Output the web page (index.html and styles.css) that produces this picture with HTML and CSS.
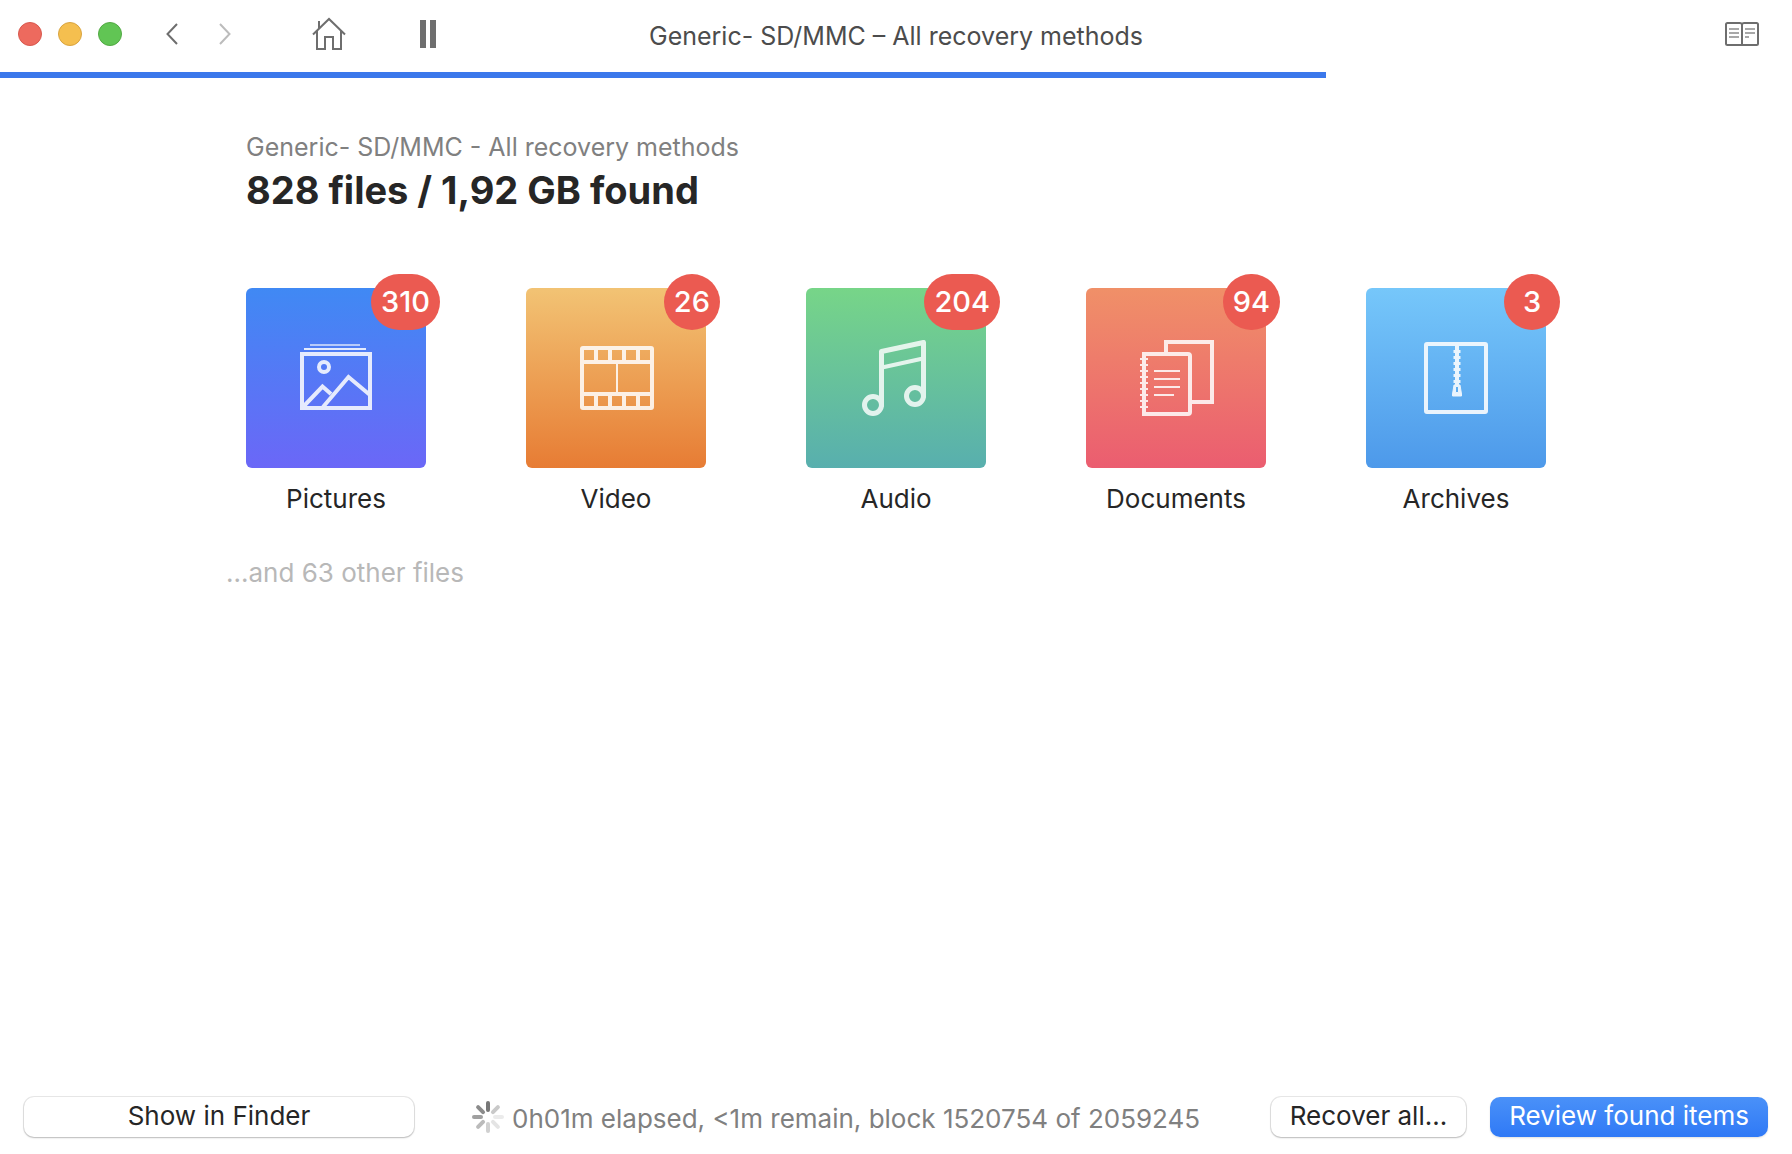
FILE: index.html
```html
<!DOCTYPE html>
<html lang="en">
<head>
    <meta charset="UTF-8">
    <meta name="viewport" content="width=device-width, initial-scale=1.0">
    <title>Generic- SD/MMC – All recovery methods</title>
    <link rel="stylesheet" href="styles.css">
</head>
<body>
    <header class="toolbar">
        <div class="toolbar-left">
            <div class="window-buttons">
                <button class="dot dot-close" aria-label="Close"></button>
                <button class="dot dot-minimize" aria-label="Minimize"></button>
                <button class="dot dot-zoom" aria-label="Zoom"></button>
            </div>
            <div class="history">
                <button class="icon-button" aria-label="Back">
                    <svg width="12" height="24" viewBox="0 0 12 24"><path d="M11 2L1.500 12L11 22"/></svg>
                </button>
                <button class="icon-button" aria-label="Forward" disabled>
                    <svg width="12" height="24" viewBox="0 0 12 24"><path d="M1 2L10.500 12L1 22"/></svg>
                </button>
            </div>
            <button class="icon-button home" aria-label="Home">
                <svg width="34" height="34" viewBox="0 0 34 34"><path d="M1 17.500L17 2L33 17.500M5 14V32H13V20H21V32H29V14M7 11V4"/></svg>
            </button>
            <button class="icon-button pause" aria-label="Pause">
                <svg width="16" height="28" viewBox="0 0 16 28"><path class="solid" d="M0 0H6V28H0ZM10 0H16V28H10Z"/></svg>
            </button>
        </div>
        <h1 class="title">Generic- SD/MMC – All recovery methods</h1>
        <div class="toolbar-right">
            <button class="icon-button" aria-label="Log">
                <svg width="34" height="24" viewBox="0 0 34 24">
                    <path d="M17 2.500Q16.500 1 15 1H2.500Q1 1 1 2.500V21.500Q1 23 2.500 23H31.500Q33 23 33 21.500V2.500Q33 1 31.500 1H19Q17.500 1 17 2.500V23"/>
                    <path class="thin" d="M4 7H14M4 11H14M4 15H14M20 7H30M20 11H30M20 15H24"/>
                </svg>
            </button>
        </div>
    </header>
    <progress class="progress" value="74" max="100" aria-label="Scan progress"></progress>

    <main class="content">
        <p class="subtitle">Generic- SD/MMC - All recovery methods</p>
        <h2 class="found">828 files / 1,92 GB found</h2>

        <div class="categories">
            <a class="category" href="#pictures">
                <span class="tile pictures">
                    <svg viewBox="0 0 180 180" width="180" height="180">
                        <g opacity="0.85" stroke-width="4">
                            <rect x="56" y="66" width="68" height="54"/>
                            <path d="M57 119L76.500 98.500L85 106M77 119L102.500 89L124 107"/>
                            <circle cx="78" cy="79" r="5"/>
                            <path stroke-width="2" d="M58 61H120"/>
                            <path stroke-width="2" opacity="0.7" d="M64 57H114"/>
                        </g>
                    </svg>
                    <span class="badge">310</span>
                </span>
                <span class="label">Pictures</span>
            </a>
            <a class="category" href="#video">
                <span class="tile video">
                    <svg viewBox="0 0 180 180" width="180" height="180">
                        <g opacity="0.85" stroke-width="4">
                            <rect x="56" y="60" width="70" height="60" rx="1"/>
                            <path d="M56 74H126M56 106H126M70 60V74M84 60V74M98 60V74M112 60V74M70 106V120M84 106V120M98 106V120M112 106V120"/>
                            <path stroke-width="2" d="M91 74V106"/>
                        </g>
                    </svg>
                    <span class="badge">26</span>
                </span>
                <span class="label">Video</span>
            </a>
            <a class="category" href="#audio">
                <span class="tile audio">
                    <svg viewBox="0 0 180 180" width="180" height="180">
                        <g opacity="0.82" stroke-width="5" stroke-linejoin="round" stroke-linecap="round">
                            <path d="M75.500 117V63.500L117.500 54.500V108"/>
                            <path stroke-width="4" d="M76 79.500L117 70.500"/>
                            <circle cx="67" cy="117" r="8.500"/>
                            <circle cx="109" cy="108" r="8.500"/>
                        </g>
                    </svg>
                    <span class="badge">204</span>
                </span>
                <span class="label">Audio</span>
            </a>
            <a class="category" href="#documents">
                <span class="tile documents">
                    <svg viewBox="0 0 180 180" width="180" height="180">
                        <g opacity="0.85" stroke-width="4">
                            <path d="M80 66V54H126V114H104"/>
                            <path d="M58 66H102Q104 66 104 68V124Q104 126 102 126H58Z"/>
                            <path stroke-width="2" d="M54 71H62M54 77H62M54 83H62M54 89H62M54 95H62M54 101H62M54 107H62M54 113H62M54 119H62"/>
                            <path stroke-width="2" d="M68 83H94M68 91H94M68 99H94M68 107H88"/>
                        </g>
                    </svg>
                    <span class="badge">94</span>
                </span>
                <span class="label">Documents</span>
            </a>
            <a class="category" href="#archives">
                <span class="tile archives">
                    <svg viewBox="0 0 180 180" width="180" height="180">
                        <g opacity="0.87" stroke-width="4">
                            <rect x="60" y="56" width="60" height="68" rx="1"/>
                            <path stroke-width="7" stroke-dasharray="3 3" d="M91 62V96"/>
                            <path stroke-width="4" d="M91 58V97"/>
                            <path class="pull" d="M88 97H94L95.500 106V108H86.500V106ZM89.500 98.500V104.500H92.500V98.500Z"/>
                        </g>
                    </svg>
                    <span class="badge">3</span>
                </span>
                <span class="label">Archives</span>
            </a>
        </div>

        <p class="others">...and 63 other files</p>
    </main>

    <footer class="bottom-bar">
        <button class="button finder">Show in Finder</button>
        <div class="status">
            <svg class="spinner" width="32" height="32" viewBox="-16 -16 32 32">
                <path d="M0 -7V-14" opacity="1"/>
                <path d="M0 -7V-14" opacity="0.4" transform="rotate(45)"/>
                <path d="M0 -7V-14" opacity="0.15" transform="rotate(90)"/>
                <path d="M0 -7V-14" opacity="0.2" transform="rotate(135)"/>
                <path d="M0 -7V-14" opacity="0.35" transform="rotate(180)"/>
                <path d="M0 -7V-14" opacity="0.5" transform="rotate(225)"/>
                <path d="M0 -7V-14" opacity="0.7" transform="rotate(270)"/>
                <path d="M0 -7V-14" opacity="0.85" transform="rotate(315)"/>
            </svg>
            <span>0h01m elapsed, &lt;1m remain, block 1520754 of 2059245</span>
        </div>
        <button class="button">Recover all...</button>
        <button class="button primary">Review found items</button>
    </footer>
</body>
</html>
```
FILE: styles.css
```css
* {
    box-sizing: border-box;
}
body {
    font-family: Inter, "Liberation Sans", sans-serif;
    font-size: 26px;
    line-height: 32px;
    color: #262626;
    background-color: #fff;
    margin: 0;
    min-height: 100vh;
    display: flex;
    flex-direction: column;
}
h1, h2, p {
    margin: 0;
}
button {
    font: inherit;
    padding: 0;
    border: none;
    cursor: pointer;
}
svg {
    display: block;
    fill: none;
}

/* toolbar */
.toolbar {
    display: grid;
    grid-template-columns: 1fr auto 1fr;
    align-items: center;
    height: 72px;
    padding: 0 18px 4px;
}
.toolbar-left {
    display: flex;
    align-items: center;
}
.toolbar-right {
    display: flex;
    justify-content: flex-end;
    padding-right: 15px;
}
.window-buttons {
    display: flex;
    gap: 16px;
}
.dot {
    width: 24px;
    height: 24px;
    border-radius: 50%;
}
.dot-close {
    background-color: #ed6a5e;
    border: 1px solid #d8584e;
}
.dot-minimize {
    background-color: #f5bf4f;
    border: 1px solid #d9a440;
}
.dot-zoom {
    background-color: #61c554;
    border: 1px solid #52a943;
}
.history {
    display: flex;
    gap: 41px;
    margin-left: 44px;
}
.icon-button {
    background: none;
    stroke: #6e6e6e;
    stroke-width: 2;
}
.icon-button:disabled {
    stroke: #bcbcbc;
}
.home {
    margin-left: 81px;
}
.pause {
    margin-left: 74px;
}
.solid {
    fill: #6e6e6e;
    stroke: none;
}
.thin {
    stroke: #a8a8a8;
}
.title {
    font-size: 25px;
    font-weight: 400;
    color: #4c4c4c;
    padding-top: 4px;
}
.progress {
    appearance: none;
    display: block;
    width: 100%;
    height: 6px;
    border: none;
}
.progress::-webkit-progress-bar {
    background-color: #fff;
}
.progress::-webkit-progress-value {
    background-color: #3b78eb;
}

/* results */
.content {
    flex: 1;
    width: 100%;
    max-width: 1300px;
    margin: 0 auto;
    padding-top: 53px;
}
.subtitle {
    font-size: 25px;
    color: #808080;
}
.found {
    font-size: 38px;
    line-height: 54px;
    font-weight: 700;
}
.categories {
    display: flex;
    justify-content: space-between;
    margin-top: 71px;
}
.category {
    display: flex;
    flex-direction: column;
    align-items: center;
    gap: 15px;
    color: #262626;
    text-decoration: none;
}
.tile {
    position: relative;
    border-radius: 6px;
    stroke: #fff;
}
.pictures {
    background: linear-gradient(#4089f4, #6b67f7);
}
.video {
    background: linear-gradient(#f2c374, #e77c34);
}
.audio {
    background: linear-gradient(#77d588, #58afae);
}
.documents {
    background: linear-gradient(#f09068, #eb5d70);
}
.archives {
    background: linear-gradient(#76c7fa, #4d99ea);
}
.pull {
    fill: #fff;
    fill-rule: evenodd;
    stroke-width: 1;
}
.badge {
    position: absolute;
    top: -14px;
    right: -14px;
    min-width: 56px;
    padding: 0 10px;
    border-radius: 28px;
    background-color: #eb5a51;
    color: #fff;
    font-size: 29px;
    line-height: 56px;
    font-weight: 500;
    text-align: center;
}
.others {
    color: #b8b8b8;
    margin-top: 42px;
    margin-left: -20px;
}

/* bottom bar */
.bottom-bar {
    display: flex;
    align-items: center;
    padding: 0 24px 17px;
}
.button {
    height: 40px;
    padding: 0 19px 2px;
    border-radius: 10px;
    background-color: #fff;
    color: #262626;
    box-shadow: 0 0 0 1px rgba(0, 0, 0, 0.09), 0 1px 2px rgba(0, 0, 0, 0.2);
}
.finder {
    width: 390px;
}
.status {
    flex: 1;
    display: flex;
    align-items: center;
    gap: 8px;
    margin-left: 58px;
    color: #808080;
}
.status span {
    padding-top: 4px;
}
.spinner {
    stroke: #777;
    stroke-width: 4;
    stroke-linecap: round;
}
.primary {
    margin-left: 24px;
    background: linear-gradient(#4a91f8, #2f79f6);
    color: #fff;
    box-shadow: 0 1px 2px rgba(0, 0, 0, 0.12);
}
```
